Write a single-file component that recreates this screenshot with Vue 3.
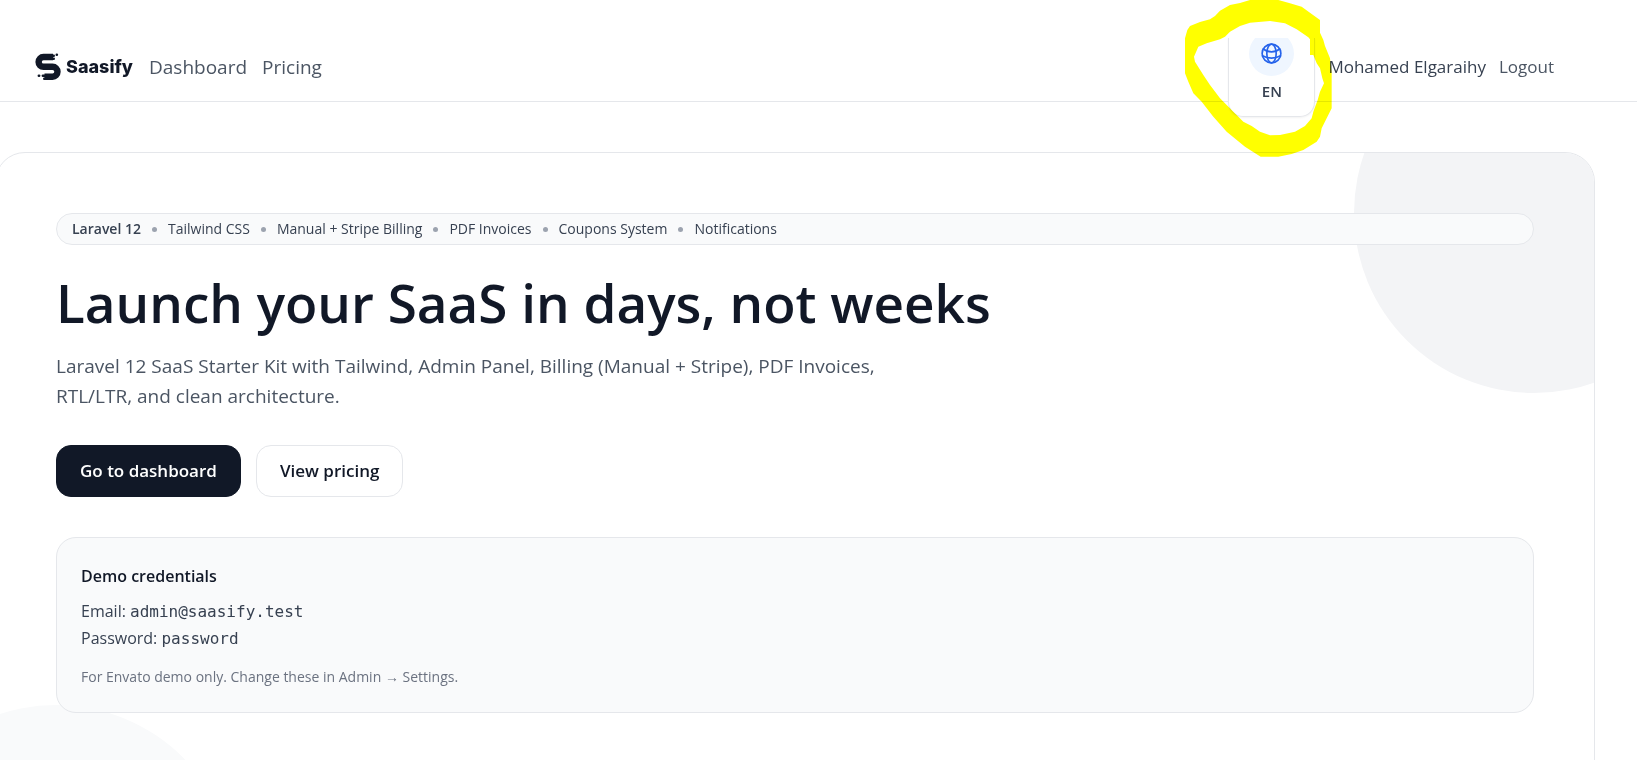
<script setup>
const features = ['Tailwind CSS', 'Manual + Stripe Billing', 'PDF Invoices', 'Coupons System', 'Notifications']
</script>

<template>
  <div class="page">
    <header class="topbar">
      <a class="brand" href="#" aria-label="Saasify home">
        <svg class="mark" viewBox="0 0 26 28" aria-hidden="true">
          <path
            d="M18 4H8.500a4.800 4.800 0 0 0 0 9.800H17.500a5 5 0 0 1 0 10H9.500"
            fill="none" stroke="#111827" stroke-width="6.400" />
          <g fill="#111827">
            <rect x="16" y="1.500" width="4" height="2.600" rx="1.300" />
            <rect x="20.500" y="0.500" width="2.600" height="2.400" rx="1.200" />
            <rect x="17" y="4.500" width="3" height="2.600" rx="1.300" />
            <rect x="2.600" y="21.500" width="2.800" height="2.500" rx="1.200" />
            <rect x="6.600" y="21.500" width="5" height="2.500" rx="1.200" />
            <rect x="8" y="24.400" width="5" height="2.600" rx="1.300" />
          </g>
        </svg>
        <span class="brand-name">Saasify</span>
      </a>
      <nav class="links">
        <a href="#">Dashboard</a>
        <a href="#">Pricing</a>
      </nav>
      <div class="account">
        <div class="lang">
          <button class="lang-button" type="button">
            <span class="lang-icon">
              <svg viewBox="0 0 24 24" fill="none" stroke="#2563eb" stroke-width="1.600" stroke-linecap="round" aria-hidden="true">
                <circle cx="12" cy="12" r="9" />
                <ellipse cx="12" cy="12" rx="4.500" ry="9" />
                <path d="M19.843 7.582A11.953 11.953 0 0 1 12 10.500c-2.998 0-5.740-1.100-7.843-2.918M20.716 14.253A17.919 17.919 0 0 1 12 16.500c-3.162 0-6.133-.815-8.716-2.247" />
              </svg>
            </span>
            <span>EN</span>
          </button>
        </div>
        <a class="user" href="#">Mohamed Elgaraihy</a>
        <button class="logout" type="button">Logout</button>
      </div>
    </header>

    <main class="hero">
      <div class="blob blob-top"></div>
      <div class="blob blob-bottom"></div>
      <div class="content">
        <div class="pill">
          <strong>Laravel 12</strong>
          <template v-for="f in features" :key="f">
            <span class="dot"></span>
            <span>{{ f }}</span>
          </template>
        </div>
        <h1>Launch your SaaS in days, not weeks</h1>
        <p class="lead">
          Laravel 12 SaaS Starter Kit with Tailwind, Admin Panel, Billing (Manual + Stripe), PDF Invoices,
          RTL/LTR, and clean architecture.
        </p>
        <div class="actions">
          <a class="btn primary" href="#">Go to dashboard</a>
          <a class="btn" href="#">View pricing</a>
        </div>
        <section class="demo">
          <h2>Demo credentials</h2>
          <p>Email: <code>admin@saasify.test</code></p>
          <p>Password: <code>password</code></p>
          <p class="note">For Envato demo only. Change these in Admin → Settings.</p>
        </section>
      </div>
    </main>

    <svg class="marker" viewBox="0 0 540 510" aria-hidden="true">
      <path
        fill="#ffff00" fill-rule="evenodd"
        d="M45 115L52 90L60 78L90 66L120 58L135 48L150 32L180 15L210 9L240 0H325L360 10L395 20L425 42L450 60V98L460 120L465 138L480 175L485 220V325L470 355L455 385L450 410L440 425L400 450L365 462L325 470H272L225 440L170 395L130 350L95 305L70 280L55 245L45 220Z
           M72 170L85 140L110 130L150 118L165 110L180 95L210 78L240 68L300 63L345 70L380 88L415 112L420 118V165H430L440 190L450 205L457 235L462 250L450 275L443 300L430 335L425 355L405 378L375 395L330 405L300 406L270 395L245 378L220 365L190 335L150 295L120 255L100 225L75 185Z" />
    </svg>
  </div>
</template>

<style>
body {
  background: #fff;
}
</style>

<style scoped>
* {
  box-sizing: border-box;
}
.page {
  position: relative;
  height: 100vh;
  overflow: hidden;
  font-family: "Open Sans", "Noto Sans", sans-serif;
  color: #374151;
}
a {
  color: inherit;
  text-decoration: none;
}
button {
  font: inherit;
  color: inherit;
  border: 0;
  padding: 0;
  background: none;
}
.topbar {
  display: flex;
  align-items: center;
  height: 102px;
  padding: 32px 83px 0 35px;
  border-bottom: 1px solid #e5e7eb;
}
.brand {
  display: flex;
  align-items: center;
  gap: 5px;
}
.mark {
  width: 26px;
  height: 28px;
}
.brand-name {
  font: 800 18px/24px Inter, sans-serif;
  color: #111827;
}
.links {
  display: flex;
  gap: 15px;
  margin-left: 16px;
  font-size: 19px;
  color: #4b5563;
}
.account {
  display: flex;
  align-items: center;
  gap: 13px;
  margin-left: auto;
  font-size: 17px;
}
.logout {
  color: #4b5563;
}
.lang {
  position: relative;
  z-index: 1;
  width: 87px;
  height: 28px;
}
.lang-button {
  position: absolute;
  bottom: -36px;
  left: 0;
  display: flex;
  flex-direction: column;
  align-items: center;
  justify-content: flex-end;
  gap: 3px;
  width: 100%;
  height: 79px;
  padding-bottom: 13px;
  overflow: hidden;
  border: 1px solid #e5e7eb;
  border-top: 0;
  border-radius: 0 0 15px 15px;
  background: #fff;
  box-shadow: 0 1px 2px #0000000d;
  font-size: 15px;
  font-weight: 600;
  line-height: 24px;
}
.lang-icon {
  display: grid;
  flex: none;
  place-items: center;
  width: 45px;
  height: 45px;
  border-radius: 50%;
  background: #eff6ff;
}
.lang-icon svg {
  width: 25px;
  height: 25px;
}
.hero {
  position: relative;
  margin: 50px 42px 0 -5px;
  padding: 60px 60px 232px;
  overflow: hidden;
  border: 1px solid #e5e7eb;
  border-radius: 30px;
}
.blob {
  position: absolute;
  width: 360px;
  height: 360px;
  border-radius: 50%;
}
.blob-top {
  top: -120px;
  right: -120px;
  background: #f3f4f6;
}
.blob-bottom {
  bottom: -120px;
  left: -120px;
  background: #f9fafb;
}
.content {
  position: relative;
}
.pill {
  display: flex;
  align-items: center;
  gap: 11px;
  padding: 5px 15px;
  border: 1px solid #e5e7eb;
  border-radius: 999px;
  background: #f9fafb;
  font-size: 14px;
  line-height: 20px;
}
.pill strong {
  font-weight: 600;
}
.dot {
  width: 5px;
  height: 5px;
  border-radius: 50%;
  background: #9ca3af;
}
h1 {
  margin: 28px 0 0;
  font-size: 53px;
  line-height: 60px;
  font-weight: 600;
  color: #111827;
}
.lead {
  max-width: 840px;
  margin: 18px 0 0;
  font-size: 19px;
  line-height: 30px;
  color: #4b5563;
}
.actions {
  display: flex;
  gap: 15px;
  margin-top: 34px;
}
.btn {
  padding: 13px 23px;
  border: 1px solid #e5e7eb;
  border-radius: 15px;
  background: #fff;
  font-size: 17px;
  line-height: 24px;
  font-weight: 600;
  color: #111827;
}
.primary {
  border-color: #111827;
  background: #111827;
  color: #fff;
}
.demo {
  margin-top: 40px;
  padding: 25px 24px;
  border: 1px solid #e5e7eb;
  border-radius: 20px;
  background: #f9fafb;
  font-size: 16px;
  line-height: 27px;
}
.demo h2 {
  margin: 0 0 8px;
  font-size: 16px;
  line-height: 27px;
  font-weight: 600;
  color: #111827;
}
.demo p {
  margin: 0;
}
.demo code {
  font-family: "DejaVu Sans Mono", monospace;
  font-size: 16px;
  line-height: 1;
}
.demo .note {
  margin-top: 15px;
  font-size: 14px;
  line-height: 20px;
  color: #6b7280;
}
.marker {
  position: absolute;
  z-index: 2;
  top: 0;
  right: 287px;
  width: 180px;
  height: 170px;
  mix-blend-mode: multiply;
  pointer-events: none;
}
</style>
